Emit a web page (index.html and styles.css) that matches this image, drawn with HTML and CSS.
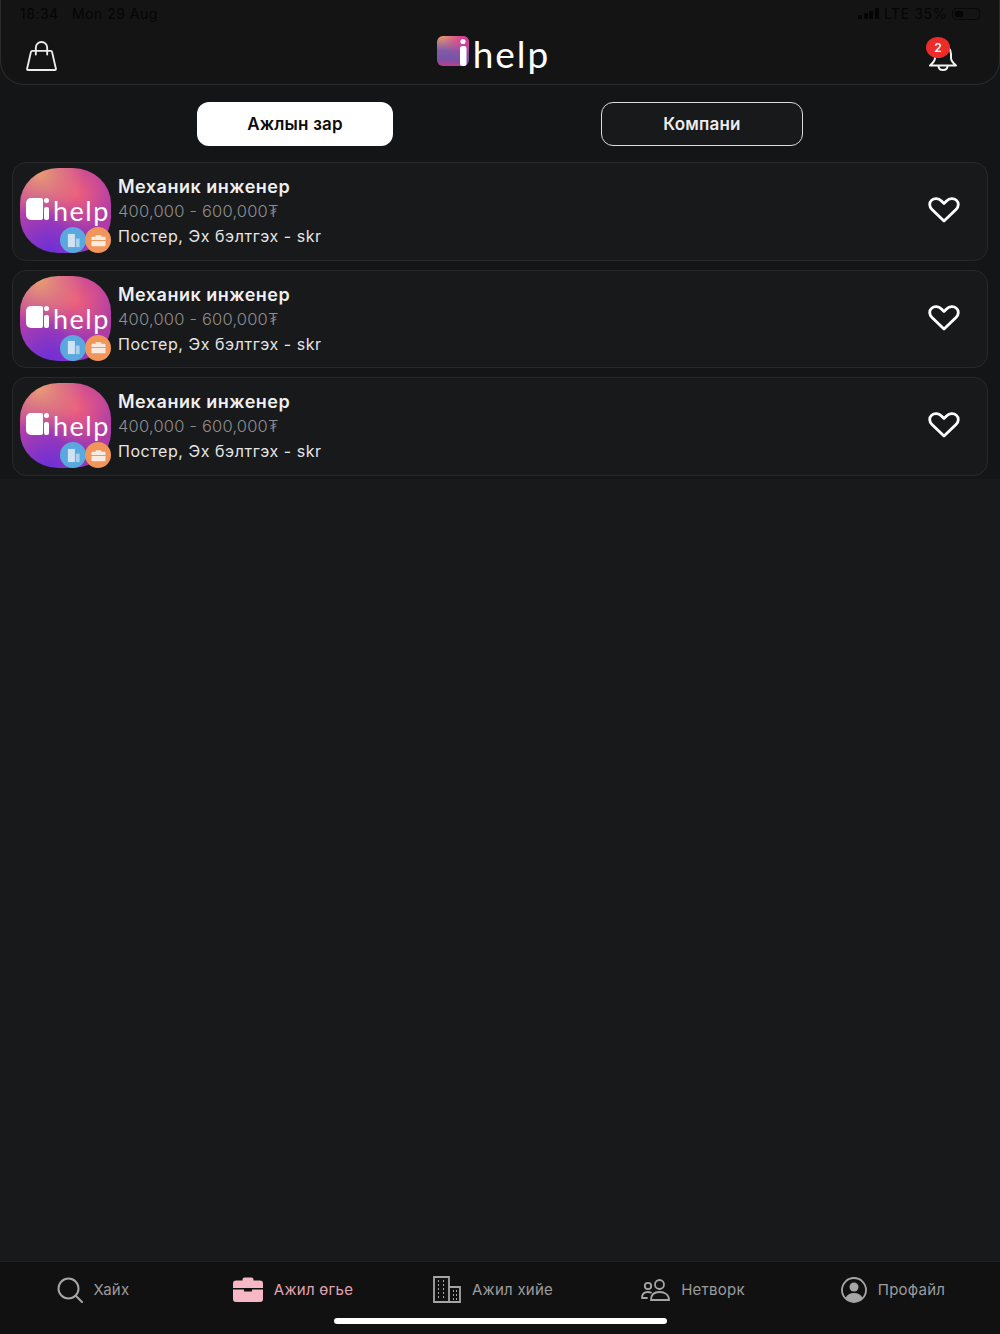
FILE: index.html
```html
<!DOCTYPE html>
<html lang="en">
<head>
    <meta charset="UTF-8">
    <meta name="viewport" content="width=device-width, initial-scale=1.0">
    <title>iHelp</title>
    <link rel="stylesheet" href="styles.css">
</head>
<body>
    <svg class="sprites" width="0" height="0">
        <defs>
            <linearGradient id="markFill" x1="0" y1="0" x2="0" y2="1">
                <stop offset="0" stop-color="#e8956f"/>
                <stop offset="0.5" stop-color="#7f5aa8"/>
                <stop offset="0.8" stop-color="#7a52a6"/>
                <stop offset="1" stop-color="#c23e88"/>
            </linearGradient>
            <radialGradient id="markGlow" cx="0.9" cy="0.05" r="0.7">
                <stop offset="0" stop-color="#d6329a"/>
                <stop offset="1" stop-color="#d6329a" stop-opacity="0"/>
            </radialGradient>
            <symbol id="heart" viewBox="0 0 32 26">
                <path d="M16 24 4 12.5C1 9.5 1 5.6 3.6 3.3 6.4.9 10.6 1.2 13.200 3.800L16 6.500l2.800-2.700C21.400 1.200 25.600.9 28.400 3.300 31 5.600 31 9.500 28 12.500Z" fill="none" stroke="#fff" stroke-width="2.800" stroke-linejoin="round"/>
            </symbol>
            <symbol id="buildingSmall" viewBox="0 0 16 16">
                <path d="M2 1h7.500v14H2z" fill="#cfe3f4"/>
                <path d="M10.500 6H14.500v9h-4z" fill="#a9d0ee"/>
            </symbol>
            <symbol id="caseSmall" viewBox="0 0 16 16">
                <path d="M5 4V2.300h6V4H14.500a1 1 0 0 1 1 1v2.500H.5V5a1 1 0 0 1 1-1Z M.5 8.500h15V13a1 1 0 0 1-1 1h-13a1 1 0 0 1-1-1Z" fill="#fbeadf"/>
            </symbol>
        </defs>
    </svg>

    <header class="top-bar">
        <div class="status-bar">
            <div class="status-time">18:34 &nbsp; Mon 29 Aug</div>
            <div class="status-right">
                <span class="signal"><i></i><i></i><i></i><i></i></span>
                <span class="status-net">LTE 35%</span>
                <span class="battery"><b></b></span>
            </div>
        </div>
        <div class="nav-row">
            <svg class="bag-icon" viewBox="0 0 30 29" fill="none" stroke="#ececec" stroke-width="1.800" stroke-linejoin="round" stroke-linecap="round">
                <path d="M6 9.500h18Q25 9.500 25.200 10.500L29 27Q29 28 28 28H2Q1 28 1 27L4.800 10.500Q5 9.500 6 9.500Z"/>
                <path d="M9.500 13V6.500a5.500 5.500 0 0 1 11 0V13"/>
            </svg>
            <div class="logo">
                <svg class="logo-mark" viewBox="0 0 33 31">
                    <rect x="0" y="0" width="32" height="30" rx="6" fill="url(#markFill)"/>
                    <rect x="0" y="0" width="32" height="30" rx="6" fill="url(#markGlow)"/>
                    <circle cx="26" cy="5.500" r="2.600" fill="#fff"/>
                    <rect x="23" y="10" width="6.500" height="20" rx="2.500" fill="#fff"/>
                </svg>
                <span class="logo-text">help</span>
            </div>
            <div class="bell">
                <svg class="bell-icon" viewBox="0 0 30 26" fill="none" stroke="#f2f2f2" stroke-width="2" stroke-linejoin="round" stroke-linecap="round">
                    <path d="M15 1c-5 0-8 3.500-8 8v4c0 3-2 5-5 7.500h26c-3-2.500-5-4.500-5-7.500V9c0-4.500-3-8-8-8Z"/>
                    <path d="M10.500 21c0 2.500 2 4 4.500 4s4.500-1.500 4.500-4"/>
                </svg>
                <span class="bell-badge">2</span>
            </div>
        </div>
    </header>

    <main>
        <section class="job-section">
            <div class="tabs">
                <button class="tab tab-active">Ажлын зар</button>
                <button class="tab tab-outline">Компани</button>
            </div>
            <div class="job-list">
                <article class="job-card">
                    <div class="avatar">
                        <span class="avatar-mark"><i></i></span>
                        <span class="avatar-text">help</span>
                        <span class="badge badge-blue"><svg><use href="#buildingSmall"/></svg></span>
                        <span class="badge badge-orange"><svg><use href="#caseSmall"/></svg></span>
                    </div>
                    <div class="job-info">
                        <div class="job-title">Механик инженер</div>
                        <div class="job-salary">400,000 - 600,000₮</div>
                        <div class="job-meta">Постер, Эх бэлтгэх - skr</div>
                    </div>
                    <svg class="heart-icon"><use href="#heart"/></svg>
                </article>
                <article class="job-card">
                    <div class="avatar">
                        <span class="avatar-mark"><i></i></span>
                        <span class="avatar-text">help</span>
                        <span class="badge badge-blue"><svg><use href="#buildingSmall"/></svg></span>
                        <span class="badge badge-orange"><svg><use href="#caseSmall"/></svg></span>
                    </div>
                    <div class="job-info">
                        <div class="job-title">Механик инженер</div>
                        <div class="job-salary">400,000 - 600,000₮</div>
                        <div class="job-meta">Постер, Эх бэлтгэх - skr</div>
                    </div>
                    <svg class="heart-icon"><use href="#heart"/></svg>
                </article>
                <article class="job-card">
                    <div class="avatar">
                        <span class="avatar-mark"><i></i></span>
                        <span class="avatar-text">help</span>
                        <span class="badge badge-blue"><svg><use href="#buildingSmall"/></svg></span>
                        <span class="badge badge-orange"><svg><use href="#caseSmall"/></svg></span>
                    </div>
                    <div class="job-info">
                        <div class="job-title">Механик инженер</div>
                        <div class="job-salary">400,000 - 600,000₮</div>
                        <div class="job-meta">Постер, Эх бэлтгэх - skr</div>
                    </div>
                    <svg class="heart-icon"><use href="#heart"/></svg>
                </article>
            </div>
        </section>
    </main>

    <nav class="bottom-nav">
        <div class="nav-items">
            <div class="nav-item">
                <svg class="nav-icon" width="26" height="26" viewBox="0 0 26 26" fill="none" stroke="#a6a6a6" stroke-width="2" stroke-linecap="round">
                    <circle cx="11.500" cy="11.500" r="10"/>
                    <path d="M18.800 18.800 25 25"/>
                </svg>
                <span>Хайх</span>
            </div>
            <div class="nav-item nav-item-active">
                <svg class="nav-icon" width="30" height="25" viewBox="0 0 30 25">
                    <path d="M9.500 3.500V2.500Q9.500 0.500 11.500 0.500H18.500Q20.500 0.500 20.500 2.500V3.500H27Q30 3.500 30 6.500V11H0V6.500Q0 3.500 3 3.500Z M0 12.500H11V14.500H19V12.500H30V22Q30 25 27 25H3Q0 25 0 22Z" fill="#f6b8c4"/>
                </svg>
                <span>Ажил өгье</span>
            </div>
            <div class="nav-item">
                <svg class="nav-icon" width="28" height="27" viewBox="0 0 28 27" fill="none" stroke="#a6a6a6" stroke-width="1.800">
                    <path d="M1 1h15v25H1zM16 11h11v15H16z"/>
                    <path d="M5 5h1M10 5h1M5 9h1M10 9h1M5 13h1M10 13h1M5 17h1M10 17h1M5 21h1M10 21h1M20 15h1M23 15h1M20 19h1M23 19h1M20 23h1M23 23h1" stroke-width="2"/>
                </svg>
                <span>Ажил хийе</span>
            </div>
            <div class="nav-item">
                <svg class="nav-icon" width="29" height="22" viewBox="0 0 29 22" fill="none" stroke="#a6a6a6" stroke-width="1.800" stroke-linecap="round">
                    <circle cx="18.500" cy="5.500" r="4.500"/>
                    <circle cx="7" cy="7" r="3.200"/>
                    <path d="M10 21c0-5 3-8 8.500-8s9.500 3 9.500 8Z"/>
                    <path d="M1 19c0-4 2-6 6-6 1 0 2 .2 3 .6M1 19h5"/>
                </svg>
                <span>Нетворк</span>
            </div>
            <div class="nav-item">
                <svg class="nav-icon" width="26" height="26" viewBox="0 0 26 26">
                    <circle cx="13" cy="13" r="12" fill="none" stroke="#a6a6a6" stroke-width="1.800"/>
                    <circle cx="13" cy="10" r="4.500" fill="#a6a6a6"/>
                    <path d="M4.500 21c1.500-3.500 4.500-5 8.500-5s7 1.500 8.500 5c-2 2.500-5 4-8.500 4s-6.500-1.500-8.500-4Z" fill="#a6a6a6"/>
                </svg>
                <span>Профайл</span>
            </div>
        </div>
        <div class="home-indicator"></div>
    </nav>
</body>
</html>
```

FILE: styles.css
```css
* {
    box-sizing: border-box;
}
body {
    margin: 0;
    height: 1334px;
    display: flex;
    flex-direction: column;
    overflow: hidden;
    background-color: #18191b;
    font-family: Inter, "Noto Sans", sans-serif;
    color: #f2f2f2;
}
.sprites {
    display: block;
}
main {
    flex: 1;
}

/* top bar */
.top-bar {
    height: 85px;
    background-color: #141414;
    border: 1px solid #2b2c2d;
    border-top: 0;
    border-radius: 0 0 24px 24px;
    position: relative;
    z-index: 1;
}
.status-bar {
    display: flex;
    justify-content: space-between;
    align-items: center;
    height: 27px;
    padding: 0 19px;
    font-size: 14px;
    letter-spacing: .5px;
    color: #050505;
}
.status-right {
    display: flex;
    align-items: center;
    gap: 5px;
}
.status-net {
    letter-spacing: .6px;
}
.signal {
    display: flex;
    align-items: flex-end;
    gap: 1.500px;
    height: 11px;
}
.signal i {
    width: 4px;
    background: #050505;
}
.signal i:nth-child(1) { height: 4px; }
.signal i:nth-child(2) { height: 6px; }
.signal i:nth-child(3) { height: 8px; }
.signal i:nth-child(4) { height: 11px; }
.battery {
    width: 28px;
    height: 12px;
    padding: 2px;
    border: 1px solid #080808;
    border-radius: 4px;
    display: flex;
}
.battery b {
    width: 8px;
    background: #050505;
    border-radius: 1px;
}
.nav-row {
    display: flex;
    justify-content: space-between;
    align-items: center;
    height: 57px;
    padding: 0 41px 0 25px;
}
.bag-icon {
    width: 31px;
    height: 30px;
    margin-top: 1px;
}
.logo {
    display: flex;
    align-items: flex-start;
    height: 40px;
    margin: 0 0 2px 2px;
}
.logo-mark {
    width: 33px;
    height: 31px;
    margin-top: 1px;
}
.logo-text {
    font-family: Lato, sans-serif;
    font-weight: 400;
    font-size: 37px;
    line-height: 38px;
    letter-spacing: 2px;
    color: #fff;
    margin-left: 3px;
}
.bell {
    position: relative;
    width: 30px;
    height: 26px;
    margin-top: 5px;
}
.bell-icon {
    display: block;
    width: 30px;
    height: 26px;
}
.bell-badge {
    position: absolute;
    left: -2px;
    top: -8px;
    width: 24px;
    height: 21px;
    border-radius: 50%;
    background: #ec2c2a;
    color: #fff;
    font-size: 12px;
    font-weight: 600;
    line-height: 21px;
    text-align: center;
}

/* tabs and list */
.job-section {
    background-color: #141516;
    margin-top: -24px;
    padding: 41px 12px 4px;
    height: 418px;
}
.tabs {
    display: flex;
    gap: 208px;
    padding-left: 185px;
    margin-bottom: 16px;
}
.tab {
    height: 44px;
    border-radius: 12px;
    font-family: inherit;
    font-size: 17px;
    font-weight: 600;
    letter-spacing: .2px;
}
.tab-active {
    width: 196px;
    border: 0;
    background: #fff;
    color: #0c0c0c;
}
.tab-outline {
    width: 202px;
    border: 1.500px solid #dcdcdc;
    background: #18191b;
    color: #ececec;
}
.job-list {
    display: flex;
    flex-direction: column;
    gap: 9px;
}
.job-card {
    display: flex;
    height: 98.500px;
    padding: 5px 7px;
    background-color: #18191b;
    border: 1px solid #27292b;
    border-radius: 14px;
}
.avatar {
    position: relative;
    width: 91px;
    height: 85px;
    border-radius: 42%;
    background:
        radial-gradient(circle at 22% 6%, rgba(238, 165, 110, .9), transparent 42%),
        radial-gradient(circle at 62% 30%, #ee5f7c, transparent 45%),
        radial-gradient(circle at 32% 100%, #6c2fd8, transparent 55%),
        linear-gradient(135deg, #c9469c, #a93aa8);
}
.avatar-mark {
    position: absolute;
    left: 6px;
    top: 30px;
    width: 17px;
    height: 22px;
    background: #fff;
    border-radius: 5px 2px 2px 5px;
}
/* the stem and dot of the i in the logo */
.avatar-mark i {
    position: absolute;
    left: 18px;
    top: 9px;
    width: 5px;
    height: 13px;
    border-radius: 2px;
    background: #fff;
}
.avatar-mark i::before {
    content: "";
    position: absolute;
    left: 0;
    top: -9px;
    width: 5px;
    height: 5px;
    border-radius: 50%;
    background: #fff;
}
.avatar-text {
    position: absolute;
    left: 33px;
    top: 27px;
    font-family: Lato, sans-serif;
    font-weight: 400;
    font-size: 27px;
    line-height: 32px;
    letter-spacing: 1.500px;
    color: #fff;
}
.badge {
    position: absolute;
    top: 59px;
    width: 26px;
    height: 26px;
    border-radius: 50%;
    display: flex;
    align-items: center;
    justify-content: center;
}
.badge svg {
    width: 15px;
    height: 15px;
}
.badge-blue {
    left: 40px;
    background: #5ba8de;
}
.badge-orange {
    left: 65px;
    background: #f0965a;
}
.job-info {
    padding-top: 6px;
    margin-left: 7px;
    line-height: 25px;
}
.job-title {
    font-size: 18px;
    font-weight: 600;
    letter-spacing: .5px;
    line-height: 26px;
    margin-bottom: -1px;
    color: #efefef;
}
.job-salary {
    font-size: 16.500px;
    font-weight: 300;
    letter-spacing: .2px;
    color: #8e8e8e;
}
.job-meta {
    font-size: 16px;
    letter-spacing: .55px;
    color: #e6e6e6;
}
.heart-icon {
    width: 32px;
    height: 26px;
    margin: 29px 20px 0 auto;
}

/* bottom nav */
.bottom-nav {
    height: 73px;
    background-color: #111112;
    border-top: 1px solid #1f2123;
}
.nav-items {
    display: grid;
    grid-template-columns: repeat(5, 200px);
    margin-left: -7px;
    height: 56px;
    padding-bottom: 1px;
}
.nav-item {
    display: flex;
    align-items: center;
    justify-content: center;
    gap: 11px;
    font-size: 15px;
    letter-spacing: .25px;
    color: #9c9c9c;
}
.nav-item-active {
    color: #e0a4b0;
}
.home-indicator {
    width: 333px;
    height: 6px;
    margin: 0 auto;
    border-radius: 3px;
    background: #fff;
}
```
